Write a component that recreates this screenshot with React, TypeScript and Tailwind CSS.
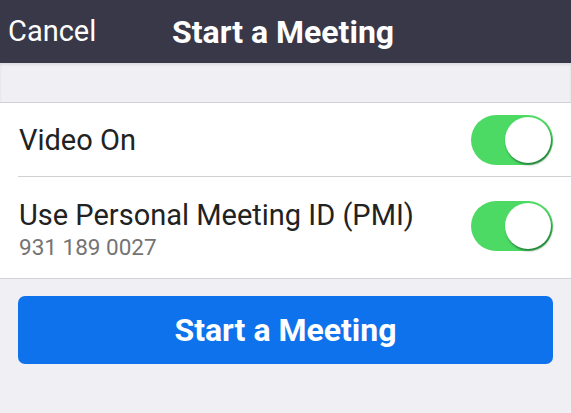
function Toggle() {
    return (
        <div className="relative h-[50px] w-[82px] shrink-0 rounded-full bg-[#4cd964]">
            <div className="absolute right-[2px] top-[2px] h-[46px] w-[46px] rounded-full bg-white shadow-[1px_2px_2px_rgba(0,60,20,0.55)]" />
        </div>
    );
}

export default function App() {
    return (
        <div className="h-[413px] w-[571px] overflow-hidden bg-[#efeff4] font-['Roboto',sans-serif]">
            <div className="relative flex h-[63px] items-center bg-[#393849] text-white">
                <span className="pl-[8px] text-[29px]">Cancel</span>
                <span className="absolute left-[172px] text-[32px] font-bold">Start a Meeting</span>
            </div>
            <div className="h-[39px] shadow-[inset_0_2px_3px_rgba(0,0,0,0.08)]" />
            <div className="border-y border-[#d1d1d6] bg-white">
                <div className="flex h-[73px] items-center pl-[19px] pr-[18px] text-[29px] text-[#222]">
                    <span className="flex-1 pt-[3px]">Video On</span>
                    <Toggle />
                </div>
                <div className="ml-[18px] border-t border-[#d1d1d6]" />
                <div className="flex h-[101px] items-center pl-[19px] pr-[18px]">
                    <div className="flex flex-1 flex-col pt-[4px]">
                        <span className="text-[29px] leading-[34px] text-[#222]">Use Personal Meeting ID (PMI)</span>
                        <span className="text-[22.5px] leading-[30px] text-[#747474]">931 189 0027</span>
                    </div>
                    <div className="mb-[4px]">
                        <Toggle />
                    </div>
                </div>
            </div>
            <div className="px-[18px] pt-[17px]">
                <button className="flex h-[68px] w-full items-center justify-center rounded-[7px] bg-[#0e72ed] text-[32px] font-bold text-white">
                    Start a Meeting
                </button>
            </div>
        </div>
    );
}
